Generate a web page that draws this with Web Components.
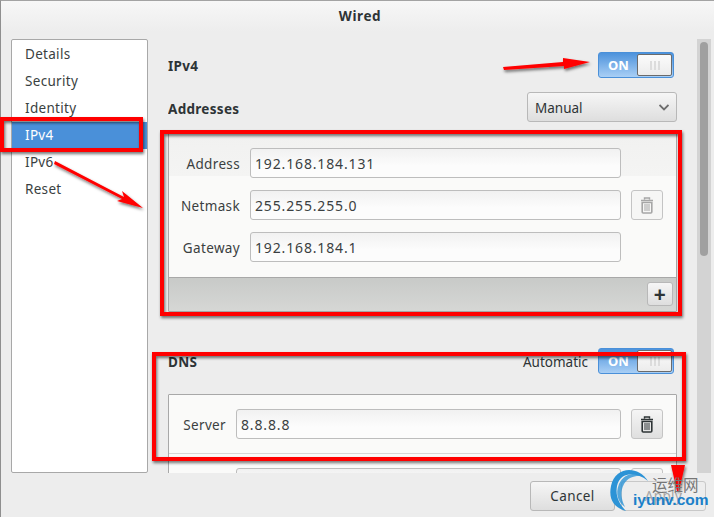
<!DOCTYPE html>
<html>
<head>
<meta charset="utf-8">
<style>
  html, body { margin: 0; padding: 0; background: #ededed; }
  body { font: 13.5px "Noto Sans", sans-serif; color: #2e3436; width: 714px; height: 517px; overflow: hidden; }
</style>
</head>
<body>
<wired-dialog>
  <span slot="title">Wired</span>
  <side-nav slot="side">
    <nav-item>Details</nav-item>
    <nav-item>Security</nav-item>
    <nav-item>Identity</nav-item>
    <nav-item selected>IPv4</nav-item>
    <nav-item>IPv6</nav-item>
    <nav-item>Reset</nav-item>
  </side-nav>

  <section-head title-text="IPv4" style="height:26px;margin-top:13px">
    <toggle-switch></toggle-switch>
  </section-head>
  <section-head title-text="Addresses" style="height:30px;margin-top:14px;--right:0px;--nudge:4px">
    <combo-box>Manual</combo-box>
  </section-head>
  <list-frame toolbar style="margin-top:11px">
    <form-row label="Address" value="192.168.184.131" shade label-width="71"></form-row>
    <form-row label="Netmask" value="255.255.255.0" trash="off" label-width="71"></form-row>
    <form-row label="Gateway" value="192.168.184.1" label-width="71" last></form-row>
  </list-frame>
  <section-head title-text="DNS" style="height:26px;margin-top:36px">
    <span style="margin-right:10px;padding-top:2px">Automatic</span>
    <toggle-switch></toggle-switch>
  </section-head>
  <list-frame style="margin-top:20px">
    <form-row label="Server" value="8.8.8.8" trash="on" label-width="57" divider></form-row>
    <form-row label="" value="" trash="off" label-width="57"></form-row>
  </list-frame>

  <push-button slot="actions">Cancel</push-button>
  <push-button slot="actions" disabled>Apply</push-button>
</wired-dialog>
<mark-up></mark-up>

<script>
class WiredDialog extends HTMLElement {
  constructor() {
    super();
    this.attachShadow({ mode: 'open' }).innerHTML = `
      <style>
        :host { display: flex; flex-direction: column; width: 714px; height: 517px; box-sizing: border-box;
                border-top: 1px solid #a3a3a3; border-left: 1px solid #8f8f8f; background: #ededed; }
        .title { height: 30px; flex: none; display: flex; align-items: center; justify-content: center;
                 padding-left: 5px; font-weight: 700; font-size: 13.5px; letter-spacing: .6px; color: #2e3436;
                 background: linear-gradient(#f7f7f7, #ededed); }
        .body { height: 434px; margin-top: 8px; flex: none; display: flex; padding-left: 10px; }
        .main { width: 529px; margin-left: 20px; height: 434px; overflow: hidden; flex: none; }
        .bar { width: 14px; background: #d3d3d3; flex: none; padding: 3px 3px 0; box-sizing: border-box; }
        .thumb { height: 214px; background: #a0a0a0; border-radius: 4px; }
        .actions { display: flex; justify-content: flex-end; gap: 6px; padding: 8px 8px 0 0; }
      </style>
      <div class="title"><slot name="title"></slot></div>
      <div class="body">
        <slot name="side"></slot>
        <div class="main"><slot></slot></div>
        <div class="bar"><div class="thumb"></div></div>
      </div>
      <div class="actions"><slot name="actions"></slot></div>`;
  }
}

class SideNav extends HTMLElement {
  constructor() {
    super();
    this.attachShadow({ mode: 'open' }).innerHTML = `
      <style>
        :host { display: block; width: 137px; height: 434px; box-sizing: border-box; flex: none;
                background: #fff; border: 1px solid #a8a8a8; border-radius: 2px; padding-top: 1px; }
      </style>
      <slot></slot>`;
  }
}

class NavItem extends HTMLElement {
  constructor() {
    super();
    this.attachShadow({ mode: 'open' }).innerHTML = `
      <style>
        :host { display: block; height: 27px; line-height: 27px; padding-left: 13px; color: #3a3f41; letter-spacing: .3px; }
        :host([selected]) { background: #4a90d9; color: #fff; }
      </style>
      <slot></slot>`;
  }
}

class SectionHead extends HTMLElement {
  constructor() {
    super();
    this.attachShadow({ mode: 'open' }).innerHTML = `
      <style>
        :host { display: flex; align-items: center; width: 509px; }
        b { font-weight: 700; margin-right: auto; padding-top: var(--nudge, 2px); letter-spacing: .3px; }
        .end { display: flex; align-items: center; padding-right: var(--right, 3px); }
      </style>
      <b>${this.getAttribute('title-text')}</b>
      <div class="end"><slot></slot></div>`;
  }
}

class ToggleSwitch extends HTMLElement {
  constructor() {
    super();
    this.attachShadow({ mode: 'open' }).innerHTML = `
      <style>
        :host { display: flex; width: 76px; height: 26px; box-sizing: border-box; border: 1px solid #4a90d9;
                border-radius: 3px; background: linear-gradient(#4d93dc, #a9cff5); padding: 1px; }
        .on { width: 37px; text-align: center; line-height: 22px; font-weight: 700; font-size: 13px; color: #fff; }
        .knob { flex: 1; box-sizing: border-box; border: 1px solid #6b6b6b; border-radius: 2px;
                background: linear-gradient(#fbfbfb, #ececec); display: flex; align-items: center; justify-content: center; gap: 2px; }
        i { width: 2px; height: 9px; background: #dcdcdc; }
      </style>
      <div class="on">ON</div>
      <div class="knob"><i></i><i></i><i></i></div>`;
  }
}

class ComboBox extends HTMLElement {
  constructor() {
    super();
    this.attachShadow({ mode: 'open' }).innerHTML = `
      <style>
        :host { display: flex; align-items: center; width: 150px; height: 30px; box-sizing: border-box; padding: 0 7px;
                border: 1px solid #b8b8b8; border-radius: 3px; background: linear-gradient(#f6f6f6, #dedede); }
        span { flex: 1; padding-top: 2px; }
      </style>
      <span><slot></slot></span>
      <svg width="10" height="7" viewBox="0 0 10 7"><path d="M.5 1 5 5.5 9.5 1" fill="none" stroke="#6d6d6d" stroke-width="1.8"/></svg>`;
  }
}

class ListFrame extends HTMLElement {
  constructor() {
    super();
    const bar = this.hasAttribute('toolbar')
      ? `<div class="tools"><push-button small>+</push-button></div>` : '';
    this.attachShadow({ mode: 'open' }).innerHTML = `
      <style>
        :host { display: block; width: 509px; box-sizing: border-box; border: 1px solid #a8a8a8; background: #fafaf9; border-radius: 1px; }
        .tools { height: 34px; box-sizing: border-box; border-top: 1px solid #a8a8a8; display: flex; justify-content: flex-end;
                 padding: 4px 3px 0 0; background: linear-gradient(#c8cac8, #d6d7d5); }
      </style>
      <slot></slot>${bar}`;
  }
}

const TRASH = `<path d="M5.5 2.5V1h5v1.5M2 3.5h12" fill="none" stroke="currentColor" stroke-width="1.4"/>
  <path d="M3.2 5.5h9.6V15a1 1 0 0 1-1 1H4.2a1 1 0 0 1-1-1z" fill="none" stroke="currentColor" stroke-width="1.6"/>
  <path d="M6 7v7M8 7v7M10 7v7" stroke="currentColor" stroke-width="1"/>`;

class FormRow extends HTMLElement {
  constructor() {
    super();
    const trash = this.getAttribute('trash');
    const w = this.getAttribute('label-width');
    this.attachShadow({ mode: 'open' }).innerHTML = `
      <style>
        :host { display: flex; align-items: flex-start; box-sizing: border-box; height: 42px; padding-top: 14px; padding-right: 13px; }
        :host([shade]) { background: linear-gradient(#f1f1f0, #f4f4f3); }
        :host([last]) { height: 59px; }
        :host([divider]) { height: 59px; border-bottom: 1px solid #d6d6d6; }
        label { width: ${w}px; text-align: right; line-height: 32px; flex: none; color: #3a3f41; letter-spacing: .35px; }
        .entry { margin-left: 10px; flex: 1; height: 30px; box-sizing: border-box; border: 1px solid #bdbdbd; border-radius: 3px;
                 background: linear-gradient(#f1f1f1, #fcfcfc 60%); line-height: 30px; padding-left: 4px; font-size: 14px; letter-spacing: .85px; color: #3a3f41; }
        .btn { width: 32px; height: 30px; box-sizing: border-box; margin-left: 10px; border: 1px solid #c4c4c4; border-radius: 3px;
               display: flex; align-items: center; justify-content: center; flex: none; }
        .on { color: #2e3436; background: linear-gradient(#f5f5f5, #dfdfdf); }
        .off { color: #a6a6a6; background: #f6f6f5; }
        .none { width: 32px; margin-left: 10px; flex: none; }
      </style>
      <label>${this.getAttribute('label')}</label>
      <div class="entry">${this.getAttribute('value')}</div>
      ${trash ? `<div class="btn ${trash}"><svg width="16" height="17" viewBox="0 0 16 17">${TRASH}</svg></div>` : `<div class="none"></div>`}`;
  }
}

class PushButton extends HTMLElement {
  constructor() {
    super();
    this.attachShadow({ mode: 'open' }).innerHTML = `
      <style>
        :host { display: flex; align-items: center; justify-content: center; width: 85px; height: 30px; box-sizing: border-box;
                border: 1px solid #b8b8b8; border-radius: 3px; letter-spacing: .4px; background: linear-gradient(#f6f6f6, #dedede); }
        :host([small]) { width: 26px; height: 24px; font-weight: 700; font-size: 21px; line-height: 22px; }
        :host([disabled]) { background: #ededed; color: #a5a5a5; border-color: #c8c8c8; }
      </style>
      <slot></slot>`;
  }
}

// red annotations and the site watermark lie over the dialog
class MarkUp extends HTMLElement {
  constructor() {
    super();
    this.attachShadow({ mode: 'open' }).innerHTML = `
      <style>
        :host { position: absolute; left: 0; top: 0; width: 714px; height: 517px; pointer-events: none; }
        svg { position: absolute; left: 0; top: 0; }
        .cn { position: absolute; left: 652px; top: 475px; font: 15.5px "Noto Sans CJK SC", sans-serif; color: #767676; line-height: 18px; }
        .en { position: absolute; left: 633px; top: 491px; font: 700 15.5px "Liberation Sans", sans-serif; color: #1b80c9; line-height: 18px; }
      </style>
      <svg width="714" height="517" viewBox="0 0 714 517">
        <defs><filter id="s" x="-10%" y="-10%" width="120%" height="120%">
          <feDropShadow dx="1" dy="2" stdDeviation="1.5" flood-color="#000" flood-opacity=".55"/>
        </filter></defs>
        <g filter="url(#s)" fill="none" stroke="#f00" stroke-width="4">
          <rect x="2" y="119" width="139" height="31"/>
          <rect x="162" y="132" width="518" height="182"/>
          <rect x="154" y="354" width="530" height="105"/>
        </g>
        <g filter="url(#s)" fill="#f00">
          <path d="M503 67 563 62 563 58 590 62 564 69 564 66 504 70z"/>
          <path d="M55 161 124 197 122 191 143 208 117 201 122 199 54 164z"/>
          <path d="M671 465 685 465 679 491 677 491z"/>
        </g>
        <g fill="#2c93d6">
          <path d="M648 481C638 465 615 466 611 486C608 500 615 508 626 511C620 505 615 497 617 486C620 472 636 471 648 481z"/>
          <path d="M645 477C636 471 624 473 619 484C615 494 618 502 625 507C621 499 620 491 624 484C629 476 638 475 645 477z" opacity=".8"/>
        </g>
      </svg>
      <div class="cn">运维网</div>
      <div class="en">iyunv.com</div>`;
  }
}

customElements.define('push-button', PushButton);
customElements.define('wired-dialog', WiredDialog);
customElements.define('side-nav', SideNav);
customElements.define('nav-item', NavItem);
customElements.define('section-head', SectionHead);
customElements.define('toggle-switch', ToggleSwitch);
customElements.define('combo-box', ComboBox);
customElements.define('list-frame', ListFrame);
customElements.define('form-row', FormRow);
customElements.define('mark-up', MarkUp);
</script>
</body>
</html>
